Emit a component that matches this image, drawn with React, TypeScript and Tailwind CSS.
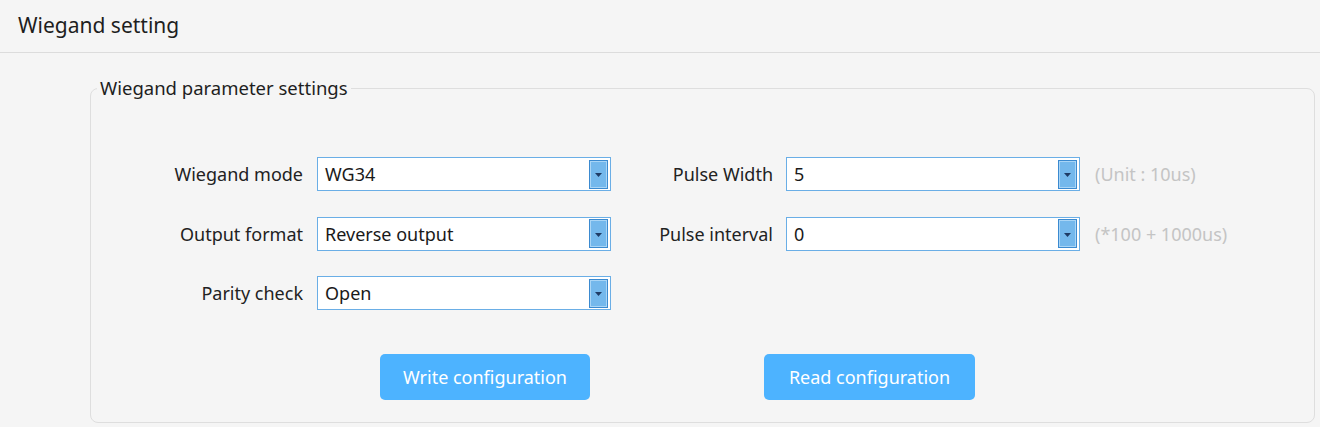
import React from 'react';

type Field = { label: string; value: string };

const leftFields: Field[] = [
  { label: 'Wiegand mode', value: 'WG34' },
  { label: 'Output format', value: 'Reverse output' },
  { label: 'Parity check', value: 'Open' },
];

const rightFields: (Field & { hint: string })[] = [
  { label: 'Pulse Width', value: '5', hint: '(Unit : 10us)' },
  { label: 'Pulse interval', value: '0', hint: '(*100 + 1000us)' },
];

// Combo box drawn like the old WinForms style control
function Combo({ value }: { value: string }) {
  return (
    <div className="flex h-[34px] w-[294px] items-center justify-between border border-[#6aaee6] bg-white pl-[7px] pr-[2px]">
      <span className="text-[18px] leading-none text-[#1a1a1a]">{value}</span>
      <div className="flex h-[29px] w-[19px] items-center justify-center border border-[#3b8ad0] bg-[#74b8ec] shadow-[inset_0_0_0_1px_#a9d5f6]">
        <svg width="7" height="4" viewBox="0 0 7 4" className="mt-[2px]">
          <path d="M0 0h7L3.5 4z" fill="#1f3c66" />
        </svg>
      </div>
    </div>
  );
}

export default function App() {
  return (
    <div className="h-[427px] w-[1320px] overflow-hidden bg-[#f5f5f5] font-['Noto_Sans',_'Open_Sans',_sans-serif] text-[#222]">
      <div className="flex h-[53px] items-center border-b border-[#dcdcdc] pl-[18px] pb-[2px]">
        <h1 className="text-[21px] leading-none text-[#1e1e1e]">Wiegand setting</h1>
      </div>

      <fieldset className="ml-[90px] mr-[5px] mt-[23px] rounded-[8px] border border-[#dedede] pb-[22px]">
        <legend className="ml-[6px] px-[3px] text-[18.5px] leading-[24px] text-[#1e1e1e]">
          Wiegand parameter settings
        </legend>

        <div className="mt-[57px] flex">
          <div className="flex flex-col gap-[25.5px]">
            {leftFields.map(f => (
              <div key={f.label} className="flex h-[34px] items-center">
                <span className="w-[226px] pr-[14px] text-right text-[18px] leading-none">{f.label}</span>
                <Combo value={f.value} />
              </div>
            ))}
          </div>
          <div className="flex flex-col gap-[25.5px]">
            {rightFields.map(f => (
              <div key={f.label} className="flex h-[34px] items-center">
                <span className="w-[175px] pr-[13px] text-right text-[18px] leading-none">{f.label}</span>
                <Combo value={f.value} />
                <span className="ml-[15px] text-[18px] leading-none text-[#c4c4c4]">{f.hint}</span>
              </div>
            ))}
          </div>
        </div>

        <div className="mt-[44px] flex gap-[174px] pl-[289px]">
          <button className="h-[46px] w-[210px] rounded-[5px] bg-[#4db3ff] text-[18px] text-white">
            Write configuration
          </button>
          <button className="h-[46px] w-[211px] rounded-[5px] bg-[#4db3ff] text-[18px] text-white">
            Read configuration
          </button>
        </div>
      </fieldset>
    </div>
  );
}
